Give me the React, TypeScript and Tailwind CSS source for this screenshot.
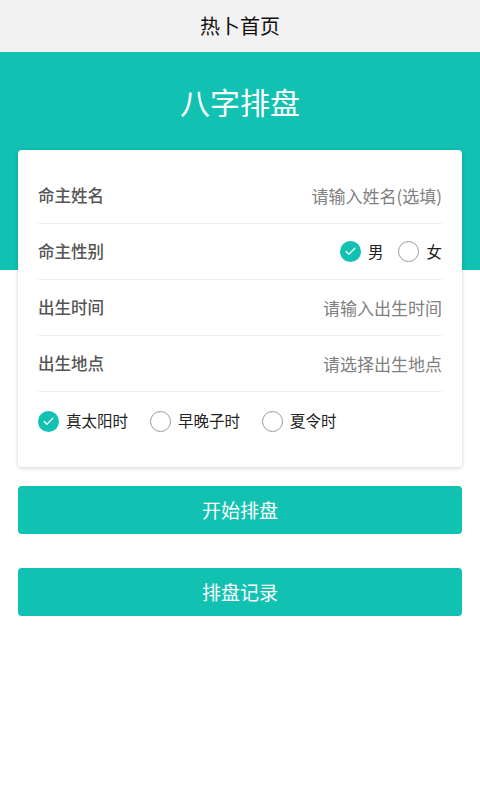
import { Check } from 'lucide-react';

const font = { fontFamily: '"Noto Sans CJK SC", "Noto Sans", sans-serif' };

function Radio({ checked, label }: { checked?: boolean; label: string }) {
  return (
    <div className="flex items-center gap-[7px]">
      {checked ? (
        <span className="w-[21px] h-[21px] rounded-full bg-[#11c1b2] flex items-center justify-center">
          <Check className="w-[13px] h-[13px] text-white" strokeWidth={2.5} />
        </span>
      ) : (
        <span className="w-[21px] h-[21px] rounded-full border border-[#999] bg-white" />
      )}
      <span className="text-[15.5px] text-[#222]">{label}</span>
    </div>
  );
}

function Row({ label, hint, children }: { label: string; hint?: string; children?: React.ReactNode }) {
  return (
    <div className="h-[56px] flex items-center justify-between border-b border-[#eeeeee]">
      <span className="text-[16.5px] font-medium text-[#555]">{label}</span>
      {hint && <span className="text-[17px] text-[#808080]">{hint}</span>}
      {children}
    </div>
  );
}

export default function App() {
  return (
    <div className="w-[480px] min-h-[800px] bg-white" style={font}>
      <div className="h-[52px] bg-[#f2f2f2] flex items-center justify-center">
        <span className="text-[20px] text-[#111]">热卜首页</span>
      </div>

      <div className="h-[218px] bg-[#11c1b2]">
        <div className="h-[98px] flex items-center justify-center">
          <span className="text-[30px] text-white">八字排盘</span>
        </div>
      </div>

      <div className="relative z-10 mx-[18px] -mt-[120px] bg-white rounded-[4px] shadow-[0_1px_4px_rgba(0,0,0,0.18)] px-5 pt-[18px] pb-[17px]">
        <Row label="命主姓名" hint="请输入姓名(选填)" />
        <Row label="命主性别">
          <div className="flex items-center gap-[15px]">
            <Radio checked label="男" />
            <Radio label="女" />
          </div>
        </Row>
        <Row label="出生时间" hint="请输入出生时间" />
        <Row label="出生地点" hint="请选择出生地点" />
        <div className="h-[58px] flex items-center gap-[22px]">
          <Radio checked label="真太阳时" />
          <Radio label="早晚子时" />
          <Radio label="夏令时" />
        </div>
      </div>

      <div className="mx-[18px] mt-[19px] flex flex-col gap-[34px]">
        <button className="h-[48px] rounded-[4px] bg-[#11c1b2] text-white text-[19px]">开始排盘</button>
        <button className="h-[48px] rounded-[4px] bg-[#11c1b2] text-white text-[19px]">排盘记录</button>
      </div>
    </div>
  );
}
